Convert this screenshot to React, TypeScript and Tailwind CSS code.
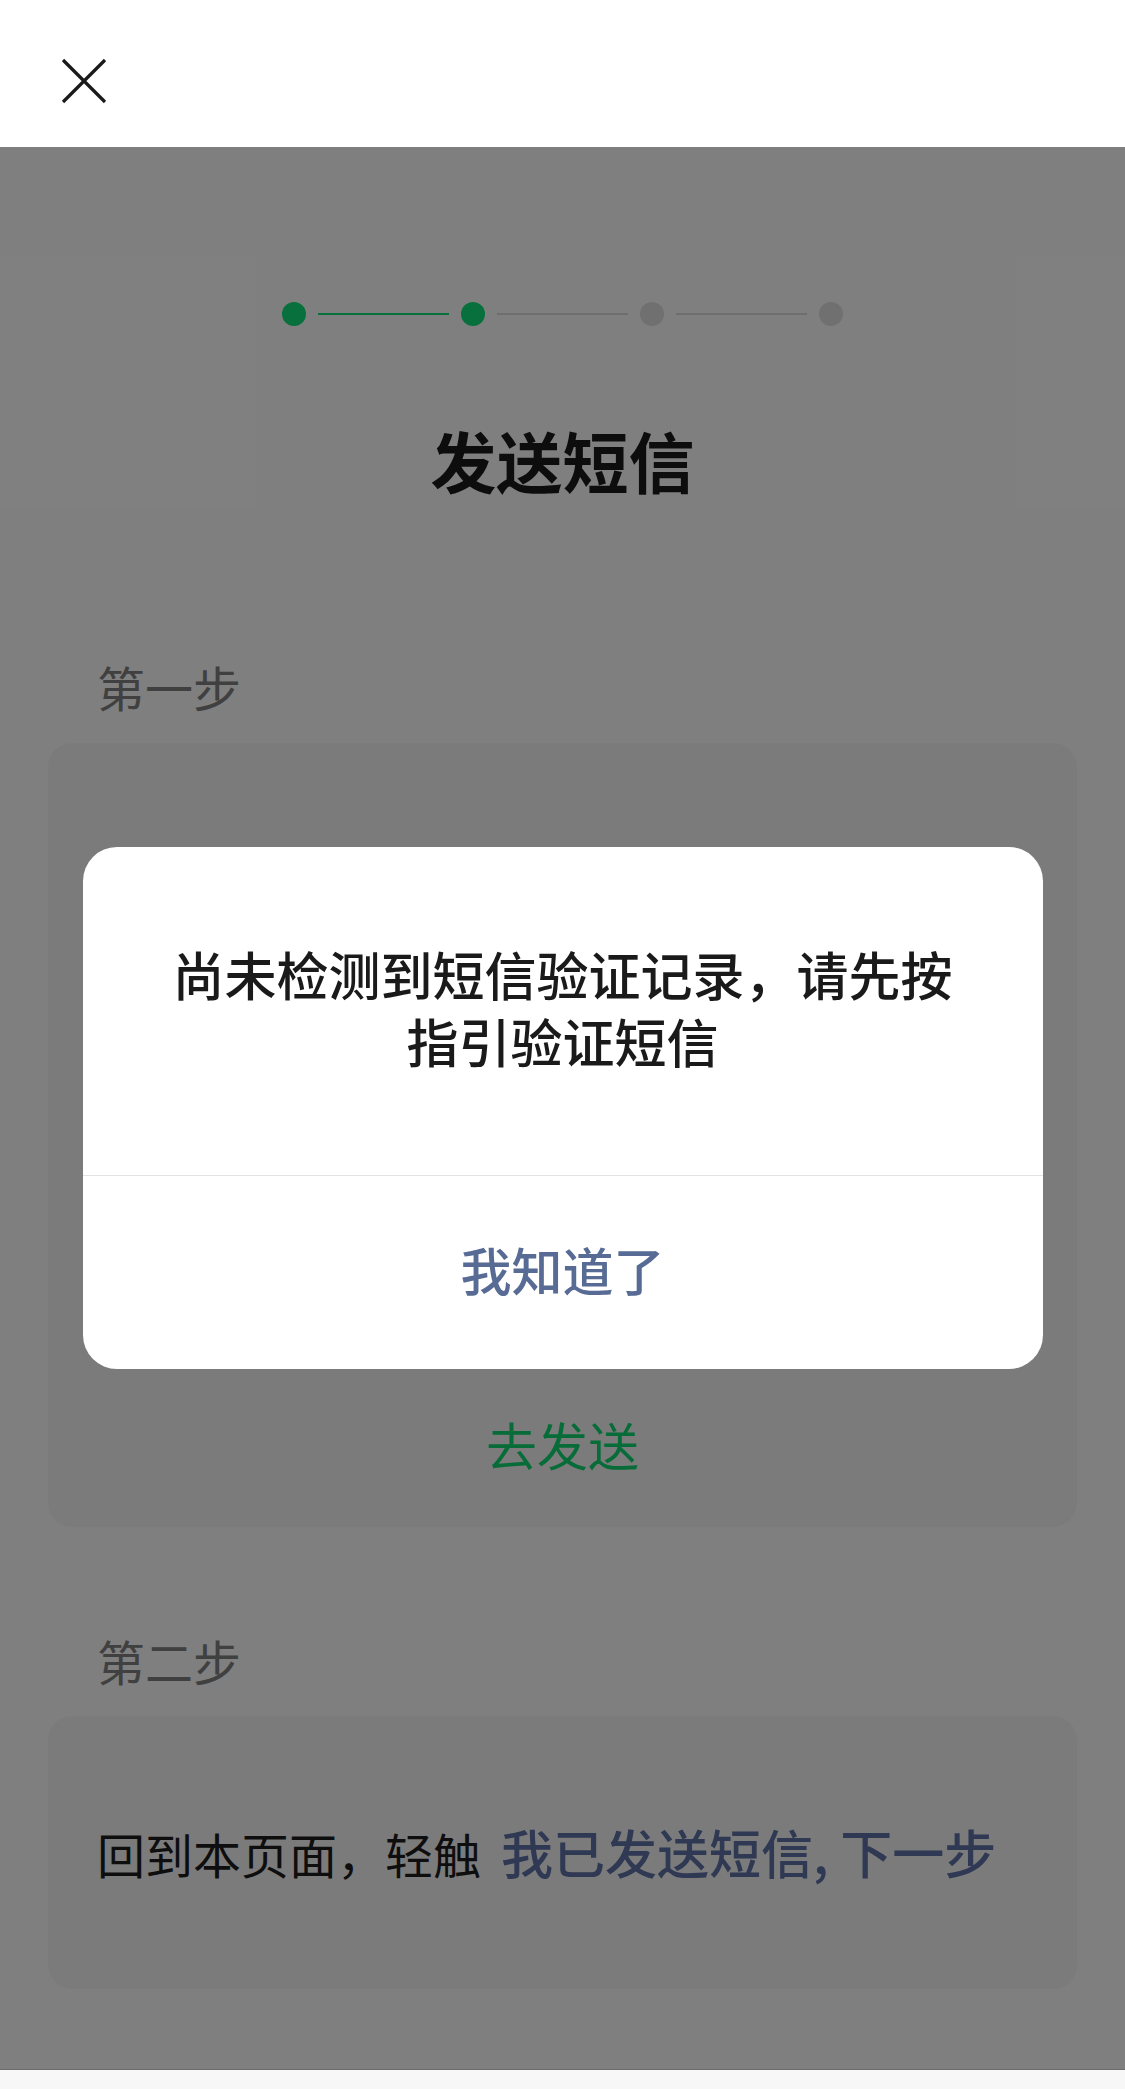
import { useState } from 'react';

const steps = [true, true, false, false];

function StepBar() {
  return (
    <div className="flex items-center justify-center">
      {steps.map((done, i) => (
        <div key={i} className="flex items-center">
          {i > 0 && (
            <div
              className={
                steps[i] ? 'mx-[12px] h-[2px] w-[131px] bg-[#10e078]' : 'mx-[12px] h-[2px] w-[131px] bg-[#dcdcdc]'
              }
            />
          )}
          <div className={done ? 'size-[24px] rounded-full bg-[#10e078]' : 'size-[24px] rounded-full bg-[#e0e0e0]'} />
        </div>
      ))}
    </div>
  );
}

function CloseIcon() {
  return (
    <svg width="46" height="46" viewBox="0 0 46 46" fill="none" stroke="#1a1a1a" strokeWidth="3.2">
      <path d="M2 2 L44 44 M44 2 L2 44" />
    </svg>
  );
}

export default function App() {
  const [open, setOpen] = useState(true);

  return (
    <div className="flex h-[2089px] w-[1125px] flex-col bg-white font-['Noto_Sans_CJK_SC','Noto_Sans',sans-serif]">
      <header className="flex h-[147px] shrink-0 items-start bg-white pt-[58px] pl-[61px]">
        <button className="flex size-[46px] items-center justify-center">
          <CloseIcon />
        </button>
      </header>

      <main className="relative flex-1 bg-white">
        <div className="pt-[155px]">
          <StepBar />
          <h1 className="mt-[94px] text-center text-[66px] leading-[79px] font-bold text-[#1a1a1a]">发送短信</h1>

          <p className="mt-[158px] pl-[97px] text-[48px] leading-[58px] text-[#808080]">第一步</p>
          <section className="mx-[48px] mt-[28px] flex h-[784px] flex-col justify-end rounded-[24px] bg-[#f7f7f7] pb-[52px]">
            <button className="text-center text-[51px] leading-[61px] text-[#10d872]">去发送</button>
          </section>

          <p className="mt-[104px] pl-[97px] text-[48px] leading-[58px] text-[#808080]">第二步</p>
          <section className="mx-[48px] mt-[27px] flex h-[273px] items-center rounded-[24px] bg-[#f7f7f7] px-[49px]">
            <p className="text-[48px] leading-[58px] text-[#1c1c1c]">
              回到本页面，轻触
              <span className="ml-[20px] text-[52px] font-medium text-[#5f72a6]">我已发送短信, 下一步</span>
            </p>
          </section>
        </div>

        {open && (
          <div className="absolute inset-0 flex items-center justify-center bg-black/50">
            <div className="w-[960px] overflow-hidden rounded-[34px] bg-white">
              <div className="px-[80px] pt-[93px] pb-[101px] text-center text-[52px] leading-[67px] font-medium text-[#1a1a1a]">
                尚未检测到短信验证记录，请先按指引验证短信
              </div>
              <div className="h-px bg-[#e3e3e3]" />
              <button
                onClick={() => setOpen(false)}
                className="flex h-[193px] w-full items-center justify-center pb-[6px] text-[51px] font-medium text-[#576b95]"
              >
                我知道了
              </button>
            </div>
          </div>
        )}
      </main>

      <div className="h-px shrink-0 bg-[#6c6c6c]" />
      <div className="h-[19px] shrink-0 bg-[#f7f7f7]" />
    </div>
  );
}
